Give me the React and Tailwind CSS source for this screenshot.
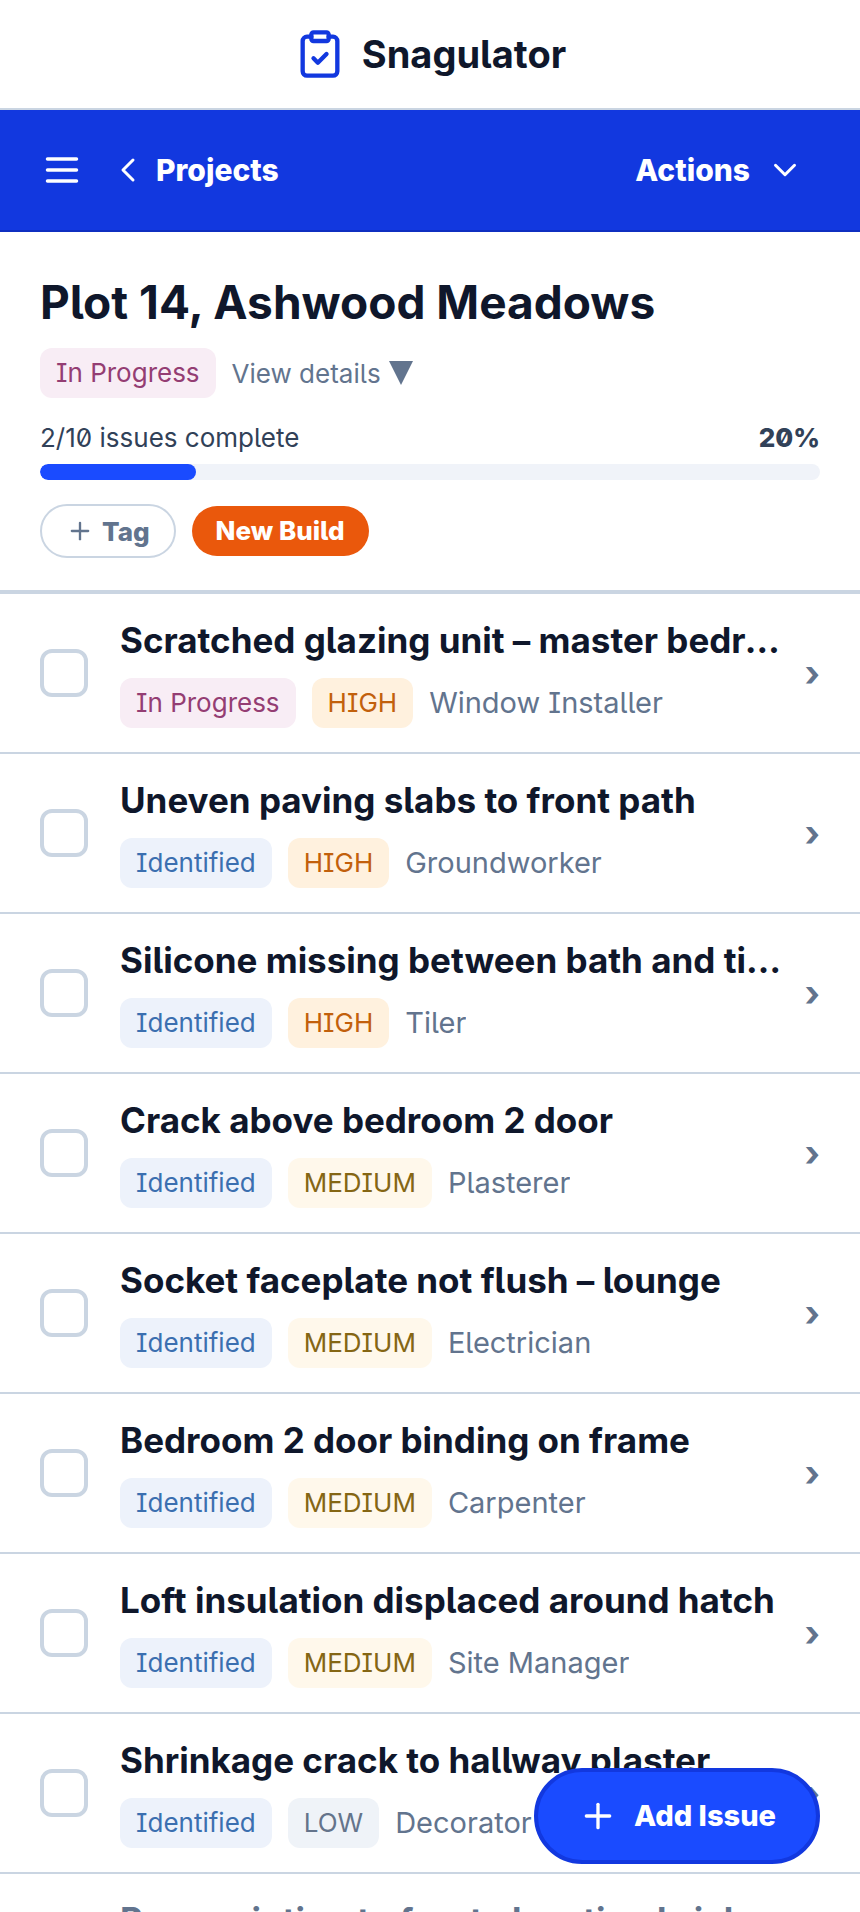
import { ClipboardCheck, ChevronLeft, ChevronDown, Plus } from "lucide-react";

const issues = [
  { title: "Scratched glazing unit – master bedroom window", status: "In Progress", priority: "HIGH", trade: "Window Installer" },
  { title: "Uneven paving slabs to front path", status: "Identified", priority: "HIGH", trade: "Groundworker" },
  { title: "Silicone missing between bath and tiled wall", status: "Identified", priority: "HIGH", trade: "Tiler" },
  { title: "Crack above bedroom 2 door", status: "Identified", priority: "MEDIUM", trade: "Plasterer" },
  { title: "Socket faceplate not flush – lounge", status: "Identified", priority: "MEDIUM", trade: "Electrician" },
  { title: "Bedroom 2 door binding on frame", status: "Identified", priority: "MEDIUM", trade: "Carpenter" },
  { title: "Loft insulation displaced around hatch", status: "Identified", priority: "MEDIUM", trade: "Site Manager" },
  { title: "Shrinkage crack to hallway plaster", status: "Identified", priority: "LOW", trade: "Decorator" },
  { title: "Poor pointing to front elevation brickwork", status: "Complete", priority: "LOW", trade: "Bricklayer", done: true },
];

const tones = {
  "In Progress": "bg-[#f8edf5] text-[#943d73]",
  Identified: "bg-[#edf2fb] text-[#3b6fb0]",
  Complete: "bg-[#e9f7ef] text-[#2f855a]",
  HIGH: "bg-[#fff1de] text-[#c2600c]",
  MEDIUM: "bg-[#fff8eb] text-[#856614]",
  LOW: "bg-[#eff3f8] text-[#64748b]",
};

function Badge({ label }) {
  return (
    <span className={`shrink-0 rounded-xl px-4 text-[26px] leading-[50px] ${tones[label]}`}>{label}</span>
  );
}

function IssueRow({ issue, index }) {
  const id = `issue-${index}`;
  return (
    <li className="flex shrink-0 items-center border-b-2 border-slate-300 px-10 py-6">
      <input
        id={id}
        type="checkbox"
        aria-label={issue.title}
        defaultChecked={issue.done}
        className="mr-8 size-12 shrink-0 appearance-none rounded-xl border-4 border-slate-300 bg-white checked:bg-slate-300"
      />
      <a href={`#${id}`} className="flex min-w-0 flex-1 items-center">
        <div className="min-w-0 flex-1">
          <h2 className={`truncate text-[35px] leading-[44px] font-bold ${issue.done ? "text-slate-500" : "text-slate-900"}`}>
            {issue.title}
          </h2>
          <div className="mt-4 flex items-center gap-4">
            <Badge label={issue.status} />
            <Badge label={issue.priority} />
            <span className="truncate text-[29px] leading-[50px] text-slate-500">{issue.trade}</span>
          </div>
        </div>
        <span aria-hidden="true" className="ml-4 text-[36px] leading-[44px] font-bold text-slate-500">›</span>
      </a>
    </li>
  );
}

export default function App() {
  return (
    <div className="relative flex h-screen flex-col overflow-hidden bg-white font-['Inter',sans-serif] text-slate-900 [font-feature-settings:'cv05','cv08','zero']">
      <header className="flex h-[110px] shrink-0 items-center justify-center gap-4 border-b-2 border-slate-300">
        <ClipboardCheck size={52} strokeWidth={2} className="text-[#1238df]" />
        <span className="text-[38px] leading-[48px] font-bold">Snagulator</span>
      </header>

      <nav className="flex h-[122px] shrink-0 items-center justify-between border-b-2 border-[#0f2fc0] bg-[#1238df] px-10 text-[30px] font-extrabold text-white">
        <div className="flex items-center">
          <button type="button" aria-label="Menu" className="mr-6">
            <svg viewBox="0 0 44 44" className="size-11" fill="none" stroke="currentColor" strokeWidth="3.5" strokeLinecap="round" aria-hidden="true">
              <path d="M7.5 11h29M7.5 22h29M7.5 33h29" />
            </svg>
          </button>
          <a href="#projects" className="flex items-center gap-2">
            <ChevronLeft size={40} strokeWidth={1.8} />
            Projects
          </a>
        </div>
        <button type="button" className="mr-4 flex items-center gap-4">
          Actions
          <ChevronDown size={38} strokeWidth={1.9} />
        </button>
      </nav>

      <section className="shrink-0 border-b-4 border-slate-300 px-10 pt-10 pb-8">
        <h1 className="text-[46px] leading-[60px] font-bold">Plot 14, Ashwood Meadows</h1>
        <div className="mt-4 flex items-center gap-4">
          <Badge label="In Progress" />
          <button type="button" className="flex items-center gap-2 text-[26px] text-slate-500">
            View details
            <svg viewBox="0 0 24 24" className="size-6" fill="currentColor" aria-hidden="true">
              <path d="M0 0h24L12 24z" />
            </svg>
          </button>
        </div>
        <div className="mt-5 flex items-center justify-between text-[26px] leading-[40px] text-slate-700">
          <span>2/10 issues complete</span>
          <span className="font-extrabold">20%</span>
        </div>
        <div role="progressbar" aria-valuenow={20} aria-valuemin={0} aria-valuemax={100} aria-label="Issues complete" className="mt-[6px] h-4 overflow-hidden rounded-full bg-[#f0f3f9]">
          <div className="h-full w-1/5 rounded-full bg-[#1a4bff]" />
        </div>
        <div className="mt-6 flex items-center gap-4">
          <button type="button" className="flex h-[54px] items-center gap-2 rounded-full border-2 border-slate-300 px-6 text-[26px] font-extrabold text-slate-500">
            <Plus size={28} strokeWidth={2} />
            Tag
          </button>
          <span className="rounded-full bg-[#ea580c] px-6 text-[26px] leading-[50px] font-extrabold text-white">New Build</span>
        </div>
      </section>

      <ul className="flex min-h-0 flex-1 flex-col overflow-hidden">
        {issues.map((issue, i) => (
          <IssueRow key={issue.title} issue={issue} index={i} />
        ))}
      </ul>

      <button
        type="button"
        className="absolute right-10 bottom-12 flex h-24 items-center gap-4 rounded-full border-4 border-[#1238df] bg-[#1a4bff] px-10 text-[29px] font-extrabold text-white [font-feature-settings:normal]"
      >
        <Plus size={40} strokeWidth={2} />
        Add Issue
      </button>
    </div>
  );
}
